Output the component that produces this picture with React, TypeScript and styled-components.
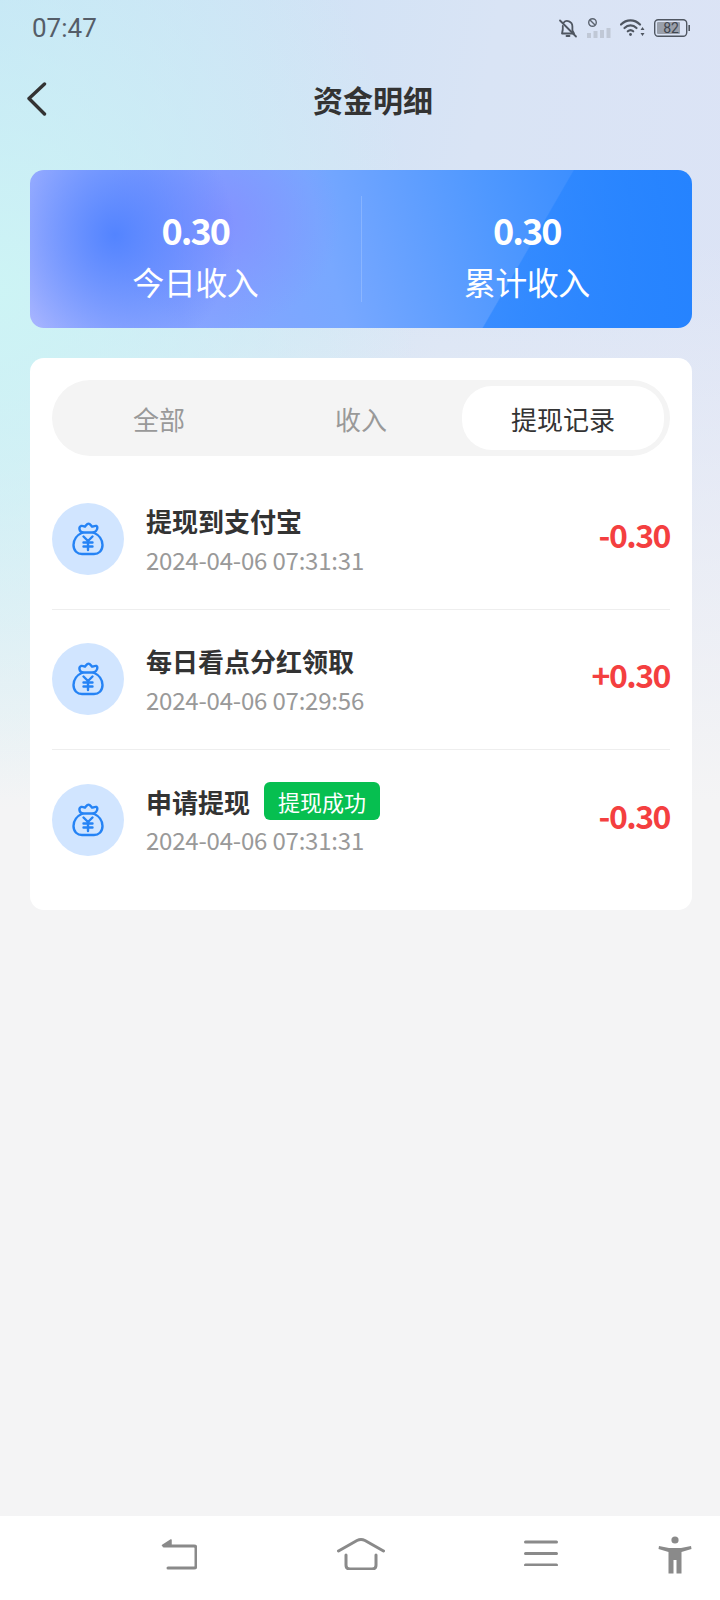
import React from 'react';
import styled, { createGlobalStyle } from 'styled-components';

const Global = createGlobalStyle`
  html, body { margin: 0; padding: 0; background: #f4f4f5; }
  * { box-sizing: border-box; }
`;

const Page = styled.div`
  width: 720px;
  height: 1600px;
  display: flex;
  flex-direction: column;
  font-family: "Noto Sans CJK SC", "Noto Sans", sans-serif;
  background:
    radial-gradient(ellipse 420px 520px at 0px 290px, rgba(205, 245, 245, 0.95), rgba(205, 245, 245, 0) 100%),
    linear-gradient(180deg, rgba(244, 244, 245, 0) 0px, rgba(244, 244, 245, 0) 240px, #f4f4f5 800px),
    linear-gradient(100deg, #c4e0f6 0%, #d9e4f5 50%, #dee3f6 100%);
`;

const StatusBar = styled.div`
  height: 56px;
  padding: 0 30px 0 32px;
  display: flex;
  align-items: center;
  justify-content: space-between;
`;

const Clock = styled.span`
  font-family: Roboto, sans-serif;
  font-size: 26px;
  color: #555d68;
`;

const StatusIcons = styled.div`
  display: flex;
  align-items: center;
  gap: 9px;
  padding-right: 0;
`;

const Header = styled.header`
  height: 86px;
  padding-left: 26px;
  position: relative;
  display: flex;
  align-items: center;
  justify-content: center;
`;

const BackButton = styled.div`
  position: absolute;
  left: 26px;
  top: 26px;
  line-height: 0;
`;

const Title = styled.h1`
  margin: 0;
  font-size: 30px;
  font-weight: 700;
  color: #333;
  line-height: 40px;
  padding-top: 0;
`;

const Content = styled.main`
  flex: 1;
  padding: 28px 28px 0 30px;
  display: flex;
  flex-direction: column;
  gap: 30px;
`;

const Summary = styled.section`
  height: 158px;
  border-radius: 14px;
  display: flex;
  align-items: center;
  overflow: hidden;
  background:
    linear-gradient(120deg, rgba(37, 131, 255, 0) 72.1%, rgba(37, 131, 255, 0.62) 72.3%, rgba(37, 131, 255, 0.9) 100%),
    radial-gradient(ellipse 120px 130px at 85px 65px, rgba(80, 130, 255, 0.95), rgba(80, 130, 255, 0) 100%),
    radial-gradient(ellipse 120px 110px at 190px 50px, rgba(132, 140, 255, 0.75), rgba(132, 140, 255, 0) 100%),
    linear-gradient(75deg, #aab6ff 0%, #87a4ff 22%, #78a8ff 45%, #4f98ff 70%, #2583ff 100%);
`;

const Stat = styled.div`
  flex: 1;
  height: 106px;
  display: flex;
  flex-direction: column;
  align-items: center;
  color: #fff;
  & + & { border-left: 1px solid rgba(255, 255, 255, 0.18); }
`;

const StatValue = styled.div`
  font-size: 36px;
  font-weight: 700;
  letter-spacing: -2px;
  line-height: 50px;
  margin-top: 8px;
`;

const StatLabel = styled.div`
  font-size: 32px;
  line-height: 46px;
  margin-top: 4px;
  white-space: nowrap;
  letter-spacing: -0.5px;
`;

const ListCard = styled.section`
  height: 552px;
  background: #fff;
  border-radius: 14px;
  padding: 22px 22px 0;
`;

const Tabs = styled.div`
  height: 76px;
  padding: 6px;
  border-radius: 38px;
  background: #f4f4f4;
  display: flex;
`;

const Tab = styled.div<{ $active?: boolean }>`
  flex: 1;
  border-radius: 30px;
  display: flex;
  align-items: center;
  justify-content: center;
  font-size: 26px;
  color: ${p => (p.$active ? '#333' : '#999')};
  background: ${p => (p.$active ? '#fff' : 'transparent')};
`;

const List = styled.div`
  margin-top: 14px;
`;

const Row = styled.div`
  height: 140px;
  display: flex;
  align-items: center;
  padding-bottom: 1px;
  border-bottom: 1px solid #eeeeee;
  &:last-child { border-bottom: 0; }
`;

const IconCircle = styled.div`
  width: 72px;
  height: 72px;
  border-radius: 50%;
  background: #d1e5ff;
  display: flex;
  align-items: center;
  justify-content: center;
  flex: none;
`;

const Texts = styled.div`
  flex: 1;
  margin-left: 22px;
  display: flex;
  flex-direction: column;
  gap: 3px;
`;

const TitleLine = styled.div`
  display: flex;
  align-items: center;
  gap: 14px;
  height: 38px;
`;

const RowTitle = styled.div`
  font-size: 26px;
  font-weight: 700;
  color: #333;
`;

const Badge = styled.span`
  height: 38px;
  width: 116px;
  border-radius: 6px;
  background: #06bf50;
  color: #fff;
  font-size: 22px;
  display: flex;
  align-items: center;
  justify-content: center;
`;

const RowDate = styled.div`
  font-size: 24px;
  line-height: 34px;
  color: #999;
  letter-spacing: -0.2px;
`;

const Amount = styled.div`
  font-size: 32px;
  font-weight: 700;
  color: #f43f40;
  letter-spacing: -1.5px;
  margin-top: -10px;
`;

const NavBar = styled.nav`
  height: 84px;
  background: #fff;
  position: relative;
  display: flex;
  align-items: center;
`;

const NavSlot = styled.div<{ $left: number }>`
  position: absolute;
  left: ${p => p.$left}px;
  top: 20px;
  line-height: 0;
`;

const BagIcon = () => (
  <svg width="32" height="34" viewBox="0 0 32 34" fill="none" stroke="#2583f5" strokeWidth="2.4" strokeLinecap="round" strokeLinejoin="round">
    <path d="M10.5 10.5 C7 9.5 6.5 5 9 4 C11 3.4 12.5 4.8 13 4.6 C14 3.6 15 1.6 16.5 1.6 C18 1.6 19 3.6 20 4.6 C21 4.8 22.5 3.4 24.5 4 C26 5 25.5 9.5 21.5 10.5" />
    <path d="M10.5 10.5 H21.5 C27 13 30.5 18 30.5 23 C30.5 29 26.5 32 22 32 H10 C5.5 32 1.5 29 1.5 23 C1.5 18 5 13 10.5 10.5 Z" />
    <path d="M11.5 14.5 L16 19 L20.5 14.5 M16 19 V28 M11.5 20.5 H20.5 M11.5 24.5 H20.5" />
  </svg>
);

const rows = [
  { title: '提现到支付宝', date: '2024-04-06 07:31:31', amount: '-0.30' },
  { title: '每日看点分红领取', date: '2024-04-06 07:29:56', amount: '+0.30' },
  { title: '申请提现', date: '2024-04-06 07:31:31', amount: '-0.30', badge: '提现成功' },
];

export default function App() {
  return (
    <Page>
      <Global />
      <StatusBar>
        <Clock>07:47</Clock>
        <StatusIcons>
          <svg width="20" height="20" viewBox="0 0 20 20" fill="none" stroke="#4f5661" strokeWidth="1.8" strokeLinecap="round" strokeLinejoin="round">
            <path d="M4 15.5 H16 L14.4 12.5 V8.5 C14.4 3 8 1.5 5.8 4.6 M4.8 8 C5 10 5 12 4 15.5" />
            <path d="M2 2.5 L18 18.5" />
            <path d="M8.5 18 H11.5" />
          </svg>
          <svg width="24" height="22" viewBox="0 0 24 22">
            <circle cx="5.5" cy="5.5" r="3.8" fill="none" stroke="#5c6470" strokeWidth="1.4" />
            <path d="M3 3 L8 8" stroke="#5c6470" strokeWidth="1.4" />
            <g fill="#c0c8d6">
              <rect x="0" y="16" width="4" height="5" />
              <rect x="6.5" y="14" width="4" height="7" />
              <rect x="13" y="13" width="4" height="8" />
              <rect x="19.5" y="11" width="4" height="10" />
            </g>
          </svg>
          <svg width="25" height="18" viewBox="0 0 25 18" fill="none" stroke="#4f5661" strokeWidth="2.2" strokeLinecap="round">
            <path d="M1 5.5 C6.5 0 14.5 0 20 5.5" />
            <path d="M4.5 9 C8 5.6 13 5.6 16.5 9" />
            <path d="M7.8 12.3 C9.5 10.8 11.5 10.8 13.2 12.3" />
            <circle cx="10.5" cy="15.5" r="1.4" fill="#4f5661" stroke="none" />
            <path d="M22.5 8 L24.5 11 H20.5 Z M22.5 17 L24.5 14 H20.5 Z" fill="#4f5661" stroke="none" />
          </svg>
          <svg width="36" height="18" viewBox="0 0 36 18">
            <rect x="0.7" y="0.7" width="32" height="16.6" rx="3.5" fill="none" stroke="#4f5661" strokeWidth="1.4" />
            <rect x="3" y="3" width="23" height="12" rx="1" fill="#9aa0ab" />
            <rect x="34.4" y="6" width="1.6" height="6" fill="#4f5661" />
            <text x="17" y="14.3" textAnchor="middle" fontFamily="Roboto, sans-serif" fontSize="14" fill="#3f4650">82</text>
          </svg>
        </StatusIcons>
      </StatusBar>
      <Header>
        <BackButton>
          <svg width="22" height="34" viewBox="0 0 22 34" fill="none" stroke="#333" strokeWidth="3.4" strokeLinecap="round" strokeLinejoin="round">
            <path d="M18.5 2 L3 16.5 L18.5 32" />
          </svg>
        </BackButton>
        <Title>资金明细</Title>
      </Header>
      <Content>
        <Summary>
          <Stat>
            <StatValue>0.30</StatValue>
            <StatLabel>今日收入</StatLabel>
          </Stat>
          <Stat>
            <StatValue>0.30</StatValue>
            <StatLabel>累计收入</StatLabel>
          </Stat>
        </Summary>
        <ListCard>
          <Tabs>
            <Tab>全部</Tab>
            <Tab>收入</Tab>
            <Tab $active>提现记录</Tab>
          </Tabs>
          <List>
            {rows.map((r, i) => (
              <Row key={i}>
                <IconCircle><BagIcon /></IconCircle>
                <Texts>
                  <TitleLine>
                    <RowTitle>{r.title}</RowTitle>
                    {r.badge && <Badge>{r.badge}</Badge>}
                  </TitleLine>
                  <RowDate>{r.date}</RowDate>
                </Texts>
                <Amount>{r.amount}</Amount>
              </Row>
            ))}
          </List>
        </ListCard>
      </Content>
      <NavBar>
        <NavSlot $left={161}>
          <svg width="36" height="34" viewBox="0 0 36 34" fill="none" stroke="#8a8a8a" strokeWidth="3" strokeLinecap="round" strokeLinejoin="round">
            <path d="M3 10 H33 Q35 10 35 12 V30 Q35 32 33 32 H7" />
            <path d="M1.5 9.5 L10 4 V10 Z" fill="#8a8a8a" strokeWidth="1.5" />
          </svg>
        </NavSlot>
        <NavSlot $left={337}>
          <svg width="48" height="34" viewBox="0 0 48 34" fill="none" stroke="#8a8a8a" strokeWidth="3" strokeLinecap="round" strokeLinejoin="round">
            <path d="M1.5 15 L20 4.5 Q24 2.5 28 4.5 L46.5 15" />
            <path d="M9 19 V29 Q9 33 13 33 H35 Q39 33 39 29 V19" />
          </svg>
        </NavSlot>
        <NavSlot $left={524}>
          <svg width="34" height="30" viewBox="0 0 34 30" fill="none" stroke="#8a8a8a" strokeWidth="3" strokeLinecap="round">
            <path d="M1.5 6 H32.5 M1.5 17.5 H32.5 M1.5 29 H32.5" />
          </svg>
        </NavSlot>
        <NavSlot $left={658}>
          <svg width="34" height="38" viewBox="0 0 34 38" fill="#8a8a8a">
            <circle cx="17" cy="4" r="3.6" />
            <path d="M1 10 L11 12 H23 L33 10 L33.5 13 L23.5 16 V37.5 H18.5 V24 H15.5 V37.5 H10.5 V16 L0.5 13 Z" />
          </svg>
        </NavSlot>
      </NavBar>
    </Page>
  );
}
